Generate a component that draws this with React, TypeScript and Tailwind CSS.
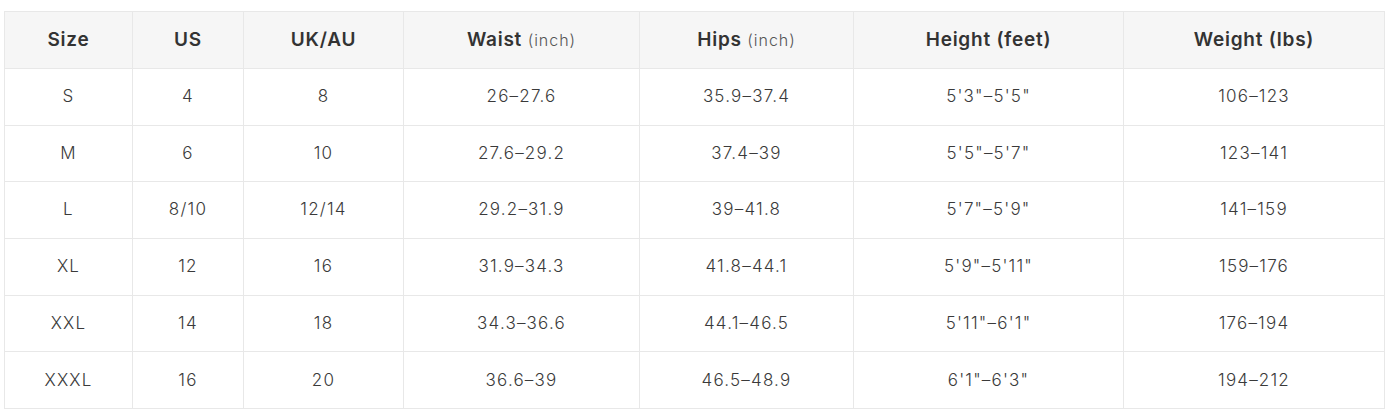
import React from "react";

const rows = [
  ["S", "4", "8", "26–27.6", "35.9–37.4", "5'3\"–5'5\"", "106–123"],
  ["M", "6", "10", "27.6–29.2", "37.4–39", "5'5\"–5'7\"", "123–141"],
  ["L", "8/10", "12/14", "29.2–31.9", "39–41.8", "5'7\"–5'9\"", "141–159"],
  ["XL", "12", "16", "31.9–34.3", "41.8–44.1", "5'9\"–5'11\"", "159–176"],
  ["XXL", "14", "18", "34.3–36.6", "44.1–46.5", "5'11\"–6'1\"", "176–194"],
  ["XXXL", "16", "20", "36.6–39", "46.5–48.9", "6'1\"–6'3\"", "194–212"],
];

const widths = ["w-[128px]", "w-[111px]", "w-[160px]", "w-[236px]", "w-[214px]", "w-[270px]", "w-[261px]"];

function App() {
  return (
    <div className="bg-white w-[1393px] h-[417px] pt-[11px] pl-[4px] font-['Inter',sans-serif] text-[#333]">
      <table className="w-[1380px] border-collapse table-fixed">
        <thead>
          <tr className="bg-[#f6f6f6] h-[57px] text-[19px] tracking-[0.04em]">
            <th className={`${widths[0]} border border-[#e8e8e8] font-semibold`}>Size</th>
            <th className={`${widths[1]} border border-[#e8e8e8] font-semibold`}>US</th>
            <th className={`${widths[2]} border border-[#e8e8e8] font-semibold`}>UK/AU</th>
            <th className={`${widths[3]} border border-[#e8e8e8] font-semibold`}>
              Waist <span className="font-light text-[16px] text-[#555] tracking-[0.06em]">(inch)</span>
            </th>
            <th className={`${widths[4]} border border-[#e8e8e8] font-semibold`}>
              Hips <span className="font-light text-[16px] text-[#555] tracking-[0.06em]">(inch)</span>
            </th>
            <th className={`${widths[5]} border border-[#e8e8e8] font-semibold`}>Height (feet)</th>
            <th className={`${widths[6]} border border-[#e8e8e8] font-semibold`}>Weight (lbs)</th>
          </tr>
        </thead>
        <tbody>
          {rows.map((row, i) => (
            <tr key={i} className="h-[56.7px] text-[17px] tracking-[0.07em]">
              {row.map((cell, j) => (
                <td key={j} className="border border-[#e8e8e8] text-center font-light text-[#3a3a3a]">
                  {cell}
                </td>
              ))}
            </tr>
          ))}
        </tbody>
      </table>
    </div>
  );
}

export default App;
